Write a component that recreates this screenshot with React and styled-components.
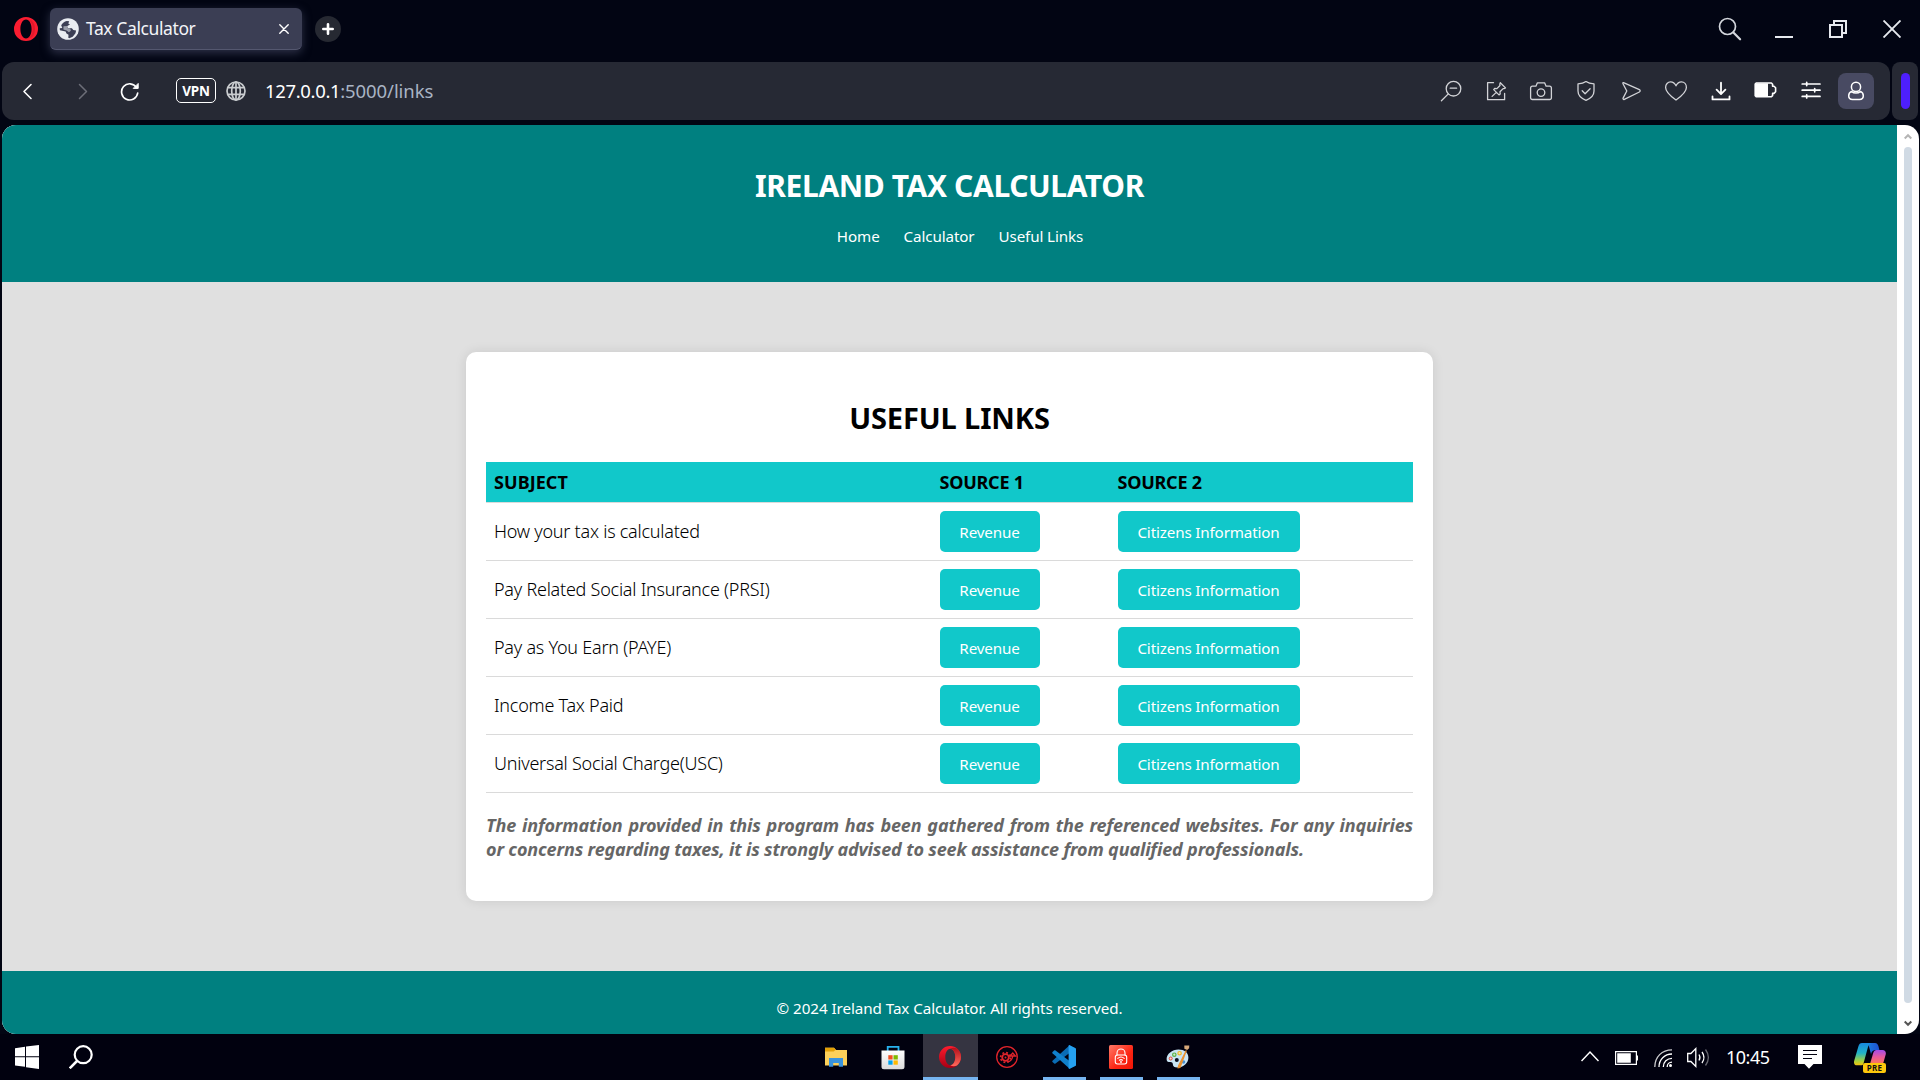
import React from "react";
import styled, { createGlobalStyle } from "styled-components";

const Global = createGlobalStyle`
  * { box-sizing: border-box; }
  html, body { margin: 0; padding: 0; background: #01030f; overflow: hidden; }
  body { font-family: "Noto Sans", "Open Sans", sans-serif; }
  svg { display: block; flex: none; }
`;

const Desktop = styled.div`
  width: 1920px;
  height: 1080px;
  display: flex;
  flex-direction: column;
  background: #020513;
  overflow: hidden;
`;

/* ---------- title bar ---------- */
const TitleBar = styled.div`
  height: 62px;
  flex: none;
  display: flex;
  align-items: flex-start;
  padding: 8px 1px 0 14px;
`;
const OperaButton = styled.div`
  width: 36px;
  padding-top: 9px;
`;
const Tab = styled.div`
  width: 252px;
  height: 42px;
  display: flex;
  align-items: center;
  padding: 0 13px 0 7px;
  border-radius: 6px;
  border-bottom: 1px solid #54576f;
  background: #3b3e54;
  box-shadow: 0 3px 10px rgba(90, 94, 125, 0.5);
`;
const TabTitle = styled.span`
  flex: 1;
  margin-left: 7px;
  padding-bottom: 1px;
  font-size: 17.5px;
  line-height: 40px;
  letter-spacing: -0.4px;
  color: #f3f4f8;
`;
const NewTab = styled.div`
  width: 26px;
  height: 26px;
  margin: 8px 0 0 13px;
  border-radius: 50%;
  background: #262932;
  display: flex;
  align-items: center;
  justify-content: center;
`;
const WindowButtons = styled.div`
  margin-left: auto;
  display: flex;
`;
const WindowButton = styled.div`
  width: 54px;
  height: 42px;
  display: flex;
  align-items: center;
  justify-content: center;
`;

/* ---------- address bar ---------- */
const BarRow = styled.div`
  height: 58px;
  flex: none;
  display: flex;
  gap: 2px;
  padding: 0 2px;
`;
const Toolbar = styled.div`
  width: 1888px;
  display: flex;
  align-items: center;
  padding-right: 11.5px;
  border-radius: 12px;
  background: #262934;
`;
const NavIcons = styled.div`
  display: flex;
  align-items: center;
  gap: 26px;
  margin-left: 10px;
`;
const VpnBadge = styled.div`
  width: 40px;
  height: 25px;
  margin: 0 0 1px 32px;
  border: 1px solid #fff;
  border-radius: 5px;
  color: #fff;
  font-size: 13.5px;
  font-weight: 700;
  line-height: 25px;
  text-align: center;
  letter-spacing: -0.2px;
`;
const GlobeSlot = styled.div`
  margin-left: 10px;
`;
const Url = styled.div`
  margin-left: 19px;
  font-size: 18.5px;
  line-height: 26px;
  letter-spacing: -0.08px;
  color: #a9b4c4;
`;
const Host = styled.span`
  color: #fff;
  letter-spacing: -0.35px;
`;
const ToolIcons = styled.div`
  margin-left: auto;
  display: flex;
`;
const ToolSlot = styled.div`
  width: 45px;
  height: 36px;
  display: flex;
  align-items: center;
  justify-content: center;
  color: ${(p) => (p.$bright ? "#fff" : "#d2d3d7")};
`;
const Profile = styled.div`
  width: 36px;
  height: 36px;
  border-radius: 8px;
  background: #484a62;
  display: flex;
  align-items: center;
  justify-content: center;
`;
const SideHandle = styled.div`
  flex: 1;
  max-width: 26px;
  border-radius: 8px;
  background: #262934;
  display: flex;
  align-items: center;
  justify-content: center;
`;
const Grip = styled.div`
  width: 9px;
  height: 36px;
  border-radius: 5px;
  background: #4e1ffc;
`;

/* ---------- web page ---------- */
const Viewport = styled.div`
  width: 1917px;
  height: 909px;
  flex: none;
  margin: 5px 0 0 2px;
  display: flex;
  border-radius: 14px;
  overflow: hidden;
  background: #fff;
`;
const Page = styled.div`
  width: 1895px;
  display: flex;
  flex-direction: column;
  background: #e0e0e0;
`;
const Header = styled.header`
  height: 157px;
  padding-top: 41px;
  background: #008080;
  color: #fff;
  text-align: center;
`;
const SiteTitle = styled.h1`
  margin: 0;
  font-size: 30px;
  line-height: 40px;
  letter-spacing: -0.38px;
`;
const Nav = styled.nav`
  display: flex;
  justify-content: center;
  gap: 24px;
  padding: 20px 0 0 21px;
`;
const NavLink = styled.a`
  font-size: 15.2px;
  line-height: 20px;
  letter-spacing: -0.12px;
`;
const Main = styled.main`
  flex: 1;
  display: flex;
  justify-content: center;
  align-items: flex-start;
  padding-top: 70px;
`;
const Card = styled.section`
  width: 967px;
  height: 549px;
  padding: 46px 20px 0;
  border-radius: 10px;
  background: #fff;
  box-shadow: 0 0 12px rgba(0, 0, 0, 0.1);
`;
const CardTitle = styled.h2`
  margin: 0 0 24px;
  font-size: 29px;
  line-height: 40px;
  letter-spacing: -0.12px;
  text-align: center;
  color: #000;
`;
const Row = styled.div`
  display: grid;
  grid-template-columns: 445.5px 178px 1fr;
  align-items: center;
  height: 58px;
  border-bottom: 1px solid #dadada;
`;
const HeadRow = styled(Row)`
  height: 41px;
  background: #11c8ca;
`;
const HeadCell = styled.div`
  padding-left: 8px;
  font-size: 18px;
  font-weight: 700;
  line-height: 24px;
  letter-spacing: ${(p) => (p.$wide ? "0.05px" : "-0.25px")};
  color: #000;
`;
const Subject = styled.div`
  padding: 0 0 2px 8px;
  font-size: 18px;
  font-weight: 350;
  line-height: 24px;
  letter-spacing: -0.24px;
  color: #000;
`;
const Source = styled.div`
  padding-left: 8px;
`;
const LinkButton = styled.a`
  display: block;
  width: ${(p) => (p.$wide ? 182 : 100)}px;
  height: 41px;
  border-radius: 5px;
  background: #11c8ca;
  color: #fff;
  font-size: 15.2px;
  line-height: 43px;
  letter-spacing: -0.15px;
  text-align: center;
`;
const Note = styled.p`
  margin: 20px 0 0;
  font-size: 18px;
  font-weight: 700;
  font-style: italic;
  line-height: 24px;
  letter-spacing: -0.15px;
  text-align: justify;
  color: #666;
`;
const Footer = styled.footer`
  height: 63px;
  padding-top: 27px;
  background: #008080;
  color: #fff;
  font-size: 15.2px;
  line-height: 20px;
  letter-spacing: -0.06px;
  text-align: center;
`;
const Scrollbar = styled.div`
  flex: 1;
  display: flex;
  flex-direction: column;
  align-items: center;
  padding-top: 8px;
`;
const Thumb = styled.div`
  width: 8px;
  height: 856px;
  margin: 7px 0 17px;
  border-radius: 4px;
  background: #d0dae4;
`;

/* ---------- taskbar ---------- */
const Taskbar = styled.div`
  height: 46px;
  flex: none;
  display: flex;
  background: #01010f;
`;
const StartArea = styled.div`
  width: 808px;
  display: flex;
  gap: 30px;
  padding: 11px 0 0 15px;
`;
const Apps = styled.div`
  display: flex;
`;
const AppSlot = styled.div`
  width: 57px;
  padding: 0 1px;
`;
const AppTile = styled.div`
  height: 46px;
  display: flex;
  flex-direction: column;
  align-items: center;
  padding-top: 11px;
  background: ${(p) => (p.$active ? "#353441" : "transparent")};

  > svg {
    margin-right: 1px;
  }
`;
const Underline = styled.div`
  width: ${(p) => (p.$active ? 55 : 43)}px;
  height: 3px;
  margin-top: auto;
  background: #76b4f0;
`;
const Tray = styled.div`
  margin-left: auto;
  display: flex;
  align-items: flex-start;
  padding: 9px 34px 0 0;
`;
const TrayItem = styled.div`
  width: ${(p) => p.$w}px;
`;
const Clock = styled.div`
  width: 72px;
  font-size: 18px;
  line-height: 28px;
  letter-spacing: -0.5px;
  color: #fff;
`;

const stroke = (w = 1.4) => ({
  fill: "none",
  stroke: "currentColor",
  strokeWidth: w,
  strokeLinecap: "round",
  strokeLinejoin: "round",
});

const OperaLogo = () => (
  <svg width="24" height="24" viewBox="0 0 24 24">
    <path fillRule="evenodd" fill="#fb1d31" d="M12 0a12 12 0 1 0 0 24a12 12 0 1 0 0-24zM12 2.6c3.2 0 5.6 4.2 5.6 9.4s-2.4 9.4-5.6 9.4S6.4 17.200 6.4 12 8.800 2.600 12 2.600z" />
    <path d="M13 2.500c3.600.8 5.800 4.600 5.800 9.500s-2.200 8.700-5.800 9.500l4.500-.9c2.500-2 3.500-5.200 3.500-8.600s-1-6.600-3.500-8.600z" fill="#b3101f" opacity=".35" />
  </svg>
);

const EarthIcon = () => (
  <svg width="22" height="22" viewBox="0 0 22 22">
    <circle cx="11" cy="11" r="10.800" fill="#e9ecf1" />
    <path fill="#3b3e54" d="M4.200 7.200c1.300-2.200 3.200-3.800 5.600-4.200l2.400.2-.9 2.200 1.700 1.200-2.700 1.500.3 1.900 4.300.3 1.400 1.800 2.800.4-.6 2.800-2.800 3.400-3.400 1.600-1-.5.2-3-2-1.200-.9-2-5.700-1.300-.2-2 2.600-.2z" />
    <path fill="#e9ecf1" d="M6.500 8.300l4-.4-.6 2.200 3.300.4.700 2.300-2 1.400-2.300-1.800-3.200-.8z" opacity=".55" />
  </svg>
);

const toolIcons = [
  <>
    <circle cx="14.500" cy="9.700" r="7.300" />
    <path d="M9.300 14.900L2.400 21.800M11.200 9.200h6.400" />
  </>,
  <>
    <path d="M9.500 3.700H3.600v17h17v-6.200" />
    <path d="M16.300 3.700l5.200 5.200-1.500.8-.9-.1-3.100 3.100.2 2.200-1.200 1-5.300-5.300 1-1.200 2.200.2 3.100-3.100-.2-1.300zM12.300 13.400l-4.200 4" />
  </>,
  <>
    <path d="M3.300 7.200h3.600l1.500-3.400h7.200l1.500 3.400h3.600a1.700 1.700 0 0 1 1.700 1.700v9.900a1.700 1.700 0 0 1-1.700 1.700H3.300a1.700 1.700 0 0 1-1.700-1.700V8.900a1.700 1.700 0 0 1 1.700-1.700z" />
    <circle cx="12" cy="13.600" r="3.800" />
  </>,
  <>
    <path d="M12 2.600c2.300 1.700 5 2.200 8 2.300v7.200c0 4.400-3.200 7.400-8 9.200-4.800-1.800-8-4.800-8-9.200V4.900c3-.1 5.700-.6 8-2.300z" />
    <path d="M8.200 11.800l2.900 2.900 5-5" />
  </>,
  <path d="M4.500 3.600l15.900 7c1 .5 1 1.900 0 2.400L5.300 20.400c-.9.4-1.600-.5-1.200-1.300L7.800 12 4 4.700c-.3-.7-.2-1.300.5-1.100z" />,
  <path d="M12 21C7.300 17.600 1.600 13.400 1.600 8.400c0-3.200 2.200-5.500 5-5.500 2.300 0 4.200 1.400 5.400 3.900 1.200-2.500 3.100-3.900 5.400-3.900 2.800 0 5 2.300 5 5.500C22.400 13.400 16.700 17.600 12 21z" />,
  <path strokeWidth="1.800" d="M12 3.700v11.200M7.600 10.700l4.400 4.400 4.400-4.400M3.500 17.400v3h17v-3" />,
  <>
    <path strokeWidth="1.600" d="M2.200 4h15.200l1.200 1.200v2H20l1.600 1.600v4L20 14.400h-1.400v2.200l-1.200 1.200H2.200l-1-1V5z" />
    <path d="M1.500 4.300h12.500v13.200H1.500z" fill="currentColor" stroke="none" />
  </>,
  <path strokeWidth="1.700" d="M3.200 5h17.800M3.200 11.200h17.800M3.200 17.400h17.800M7.700 3.400v3.200M15.700 9.600v3.200M7.700 15.800V19" />,
];

const ProfileIcon = () => (
  <svg width="24" height="24" viewBox="0 0 24 24" color="#fff" {...stroke(1.5)}>
    <circle cx="12" cy="7.900" r="4.600" />
    <path d="M7.400 12.400c-1.800 1-2.700 2.500-2.700 4.300 0 2.400 1.500 3.700 3.800 3.700h7c2.300 0 3.800-1.300 3.800-3.700 0-1.800-.9-3.300-2.700-4.300-1.300 1.100-2.800 1.700-4.600 1.700s-3.300-.6-4.600-1.700z" />
  </svg>
);

const ExplorerIcon = () => (
  <svg width="24" height="24" viewBox="0 0 24 24">
    <path d="M1 2.800h9l2 2.200H23v15.500H1z" fill="#fcd05a" />
    <path d="M1 2.800h9l1.800 2L9.600 6.400H1z" fill="#e3a008" />
    <path d="M5 21.800V13h14v8.800h-4.200V18H9.200v3.800z" fill="#3a93dc" />
  </svg>
);
const StoreIcon = () => (
  <svg width="24" height="25" viewBox="0 0 24 25">
    <defs>
      <linearGradient id="bag" x1="0" y1="0" x2="0" y2="1">
        <stop offset="0" stopColor="#fff" />
        <stop offset="1" stopColor="#dcdcdc" />
      </linearGradient>
    </defs>
    <path d="M6.700 6.500V1.900h10.800v4.600" fill="none" stroke="#27b2ee" strokeWidth="1.800" />
    <path d="M.5 5.400h23v16.400a2.500 2.500 0 0 1-2.500 2.500H3a2.500 2.500 0 0 1-2.500-2.500z" fill="url(#bag)" />
    <path d="M7.300 10.200h4.300v4.300H7.300z" fill="#f25022" />
    <path d="M12.500 10.200h4.300v4.300h-4.300z" fill="#7fba00" />
    <path d="M7.300 15.400h4.300v4.300H7.300z" fill="#00a4ef" />
    <path d="M12.500 15.400h4.300v4.300h-4.300z" fill="#ffb900" />
  </svg>
);
const OperaAppIcon = () => (
  <svg width="24" height="24" viewBox="0 0 24 24">
    <defs>
      <linearGradient id="operaL" x1="0" y1="0" x2="0" y2="1">
        <stop offset="0" stopColor="#ff1b2d" />
        <stop offset="1" stopColor="#a70014" />
      </linearGradient>
      <linearGradient id="operaR" x1="0" y1="0" x2="0" y2="1">
        <stop offset="0" stopColor="#b3101b" />
        <stop offset="1" stopColor="#ff6a5c" />
      </linearGradient>
    </defs>
    <path fillRule="evenodd" fill="url(#operaL)" d="M12 1a11 11 0 1 0 0 22a11 11 0 1 0 0-22zM12.300 3.800c2.900 0 5 3.700 5 8.200s-2.100 8.200-5 8.200-5-3.700-5-8.200 2.100-8.200 5-8.200z" />
    <path fill="url(#operaR)" d="M12.300 3.800C14 2.600 16.600 2.400 19 3.500c2.500 2 4 5.100 4 8.500s-1.500 6.500-4 8.500c-2.400 1.100-5 .9-6.700-.3 2.900 0 5-3.700 5-8.200s-2.100-8.200-5-8.200z" />
  </svg>
);
const GearAppIcon = () => (
  <svg width="24" height="24" viewBox="0 0 24 24" fill="none" stroke="#e0242b">
    <circle cx="12" cy="12" r="10.300" strokeWidth="1.300" />
    <circle cx="10.500" cy="12.500" r="3.300" strokeWidth="1.800" />
    <circle cx="10.500" cy="12.500" r="4.900" strokeWidth="1.700" strokeDasharray="1.900 1.950" />
    <path d="M12.500 17c3.500-.8 5-3 5.200-6M15 11l2.800-3 2.600 3z" strokeWidth="1.400" />
    <circle cx="10.500" cy="12.500" r="1" fill="#e0242b" stroke="none" />
  </svg>
);
const CodeIcon = () => (
  <svg width="24" height="24" viewBox="0 0 24 24">
    <path d="M17.600.2L.5 15.700c-.4.4-.4 1 0 1.400l1.700 1.500c.4.300.9.300 1.300 0L23.600 3.400z" fill="#0a6cb5" />
    <path d="M17.600 23.800L.5 8.300c-.4-.4-.4-1 0-1.400l1.700-1.500c.4-.3.9-.3 1.300 0L23.600 20.600z" fill="#1080cc" />
    <path d="M17.600 23.800c-.7.300-1 0-1-.7V.9c0-.7.400-1 1-.7l5.600 2.700c.5.300.8.700.8 1.200v15.800c0 .5-.3.900-.8 1.200z" fill="#25a0f0" />
  </svg>
);
const LockIcon = () => (
  <svg width="24" height="24" viewBox="0 0 24 24">
    <defs>
      <linearGradient id="lockBg" x1="0" y1="0" x2="1" y2="1">
        <stop offset="0" stopColor="#ff7a68" />
        <stop offset=".6" stopColor="#fc2412" />
        <stop offset="1" stopColor="#f01505" />
      </linearGradient>
    </defs>
    <rect width="24" height="24" rx="1.500" fill="url(#lockBg)" />
    <g fill="none" stroke="#fff" strokeWidth="1.100" strokeLinecap="round">
      <path d="M8 10V8a4 4 0 0 1 8 0v2" />
      <rect x="6.300" y="10" width="11.400" height="9" rx="2.200" />
      <path d="M8.800 13.300c1.900-1.600 4.500-1.600 6.400 0M10.400 15.200c1-.8 2.200-.8 3.200 0" />
    </g>
    <circle cx="12" cy="17" r=".9" fill="#fff" />
  </svg>
);
const PaintIcon = () => (
  <svg width="24" height="24" viewBox="0 0 24 24">
    <path d="M12.500 4.500C6 4.500.6 9 .6 14c0 2.200 1 3.300 2.700 3 2-.4 3.500.2 3.500 2 0 2.300 1.700 3.600 4.600 3.600 6.200 0 11-4.500 11-10 0-5-4-8.100-9.900-8.100z" fill="#c9e5f4" />
    <circle cx="10.800" cy="15" r="2" fill="#0b1020" />
    <circle cx="4.700" cy="13.500" r="1.500" fill="#f4d9d6" stroke="#e04b3a" />
    <circle cx="8.300" cy="9.700" r="1.700" fill="#cfe9c8" stroke="#58b04a" strokeWidth="1.200" />
    <circle cx="13.600" cy="8.200" r="1.700" fill="#f8e3a0" stroke="#eeb72c" strokeWidth="1.200" />
    <circle cx="17.500" cy="17" r="1.800" fill="#4a90d0" />
    <path d="M20.300 5.500l-6.300 17-1.800.3.400-2z" fill="#ea9230" stroke="#ea9230" strokeWidth="1.200" />
    <path d="M18.300.4l5 .2-.2 2.600-1.900 1.800-2.800-1.200z" fill="#d7a97a" />
  </svg>
);

const CopilotIcon = () => (
  <svg width="32" height="31" viewBox="0 0 32 31">
    <defs>
      <linearGradient id="coA" x1="0" y1="0" x2="0" y2="1">
        <stop offset="0" stopColor="#1789e0" />
        <stop offset=".45" stopColor="#21b3c7" />
        <stop offset=".8" stopColor="#a5d13c" />
        <stop offset="1" stopColor="#f6c30c" />
      </linearGradient>
      <linearGradient id="coB" x1="0" y1="0" x2="0" y2="1">
        <stop offset="0" stopColor="#a24bea" />
        <stop offset=".5" stopColor="#e9599b" />
        <stop offset="1" stopColor="#fb7a55" />
      </linearGradient>
      <linearGradient id="coC" x1="0" y1="0" x2="1" y2="0">
        <stop offset="0" stopColor="#188be4" />
        <stop offset="1" stopColor="#1f4fd0" />
      </linearGradient>
    </defs>
    <path d="M9 0h12c2 0 3 1.500 3.400 3l1 4H22c-3 0-4 1-5 4L14 0z" fill="url(#coC)" />
    <path d="M8 0h9c-2 1-2.700 3-3.300 5L9.500 20.500C9 22 8 22.300 7 22.300H3c-2.500 0-3.500-2-2.800-4.500L4.500 3C5.200 1 6 0 8 0z" fill="url(#coA)" />
    <path d="M22.500 7h6c2.600 0 3.800 2 3.200 4.500L29 21H16l3.300-11.300C20 7.800 21 7 22.500 7z" fill="url(#coB)" />
    <rect x="9" y="20" width="23" height="10" rx="2" fill="#fdc70c" />
    <text x="20.600" y="28" textAnchor="middle" fontSize="8" fontWeight="700" letterSpacing=".3" fontFamily="Noto Sans, sans-serif" fill="#111">PRE</text>
  </svg>
);

const apps = [
  { icon: <ExplorerIcon /> },
  { icon: <StoreIcon /> },
  { icon: <OperaAppIcon />, active: true },
  { icon: <GearAppIcon /> },
  { icon: <CodeIcon />, open: true },
  { icon: <LockIcon />, open: true },
  { icon: <PaintIcon />, open: true },
];

const subjects = [
  "How your tax is calculated",
  "Pay Related Social Insurance (PRSI)",
  "Pay as You Earn (PAYE)",
  "Income Tax Paid",
  "Universal Social Charge(USC)",
];

export default function App() {
  return (
    <Desktop>
      <Global />
      <TitleBar>
        <OperaButton><OperaLogo /></OperaButton>
        <Tab>
          <EarthIcon />
          <TabTitle>Tax Calculator</TabTitle>
          <svg width="10" height="10" viewBox="0 0 10 10" color="#fff" {...stroke(1.4)}><path d="M.8.8l8.400 8.400M9.200.8L.8 9.200" /></svg>
        </Tab>
        <NewTab>
          <svg width="12" height="12" viewBox="0 0 12 12" color="#fff" {...stroke(2.6)}><path d="M6 1.300v9.400M1.300 6h9.400" /></svg>
        </NewTab>
        <WindowButtons>
          <WindowButton>
            <svg width="24" height="24" viewBox="0 0 24 24" color="#d3d6dc" {...stroke(1.7)}><circle cx="9.500" cy="9.500" r="8" /><path d="M15.400 15.400l6.700 6.900" strokeWidth="2.200" /></svg>
          </WindowButton>
          <WindowButton>
            <svg width="18" height="18" viewBox="0 0 18 18"><path d="M0 16h18v2H0z" fill="#e6e9ee" /></svg>
          </WindowButton>
          <WindowButton>
            <svg width="18" height="18" viewBox="0 0 18 18" fill="none" stroke="#e6e9ee" strokeWidth="2"><path d="M1 5h12v12H1zM5 5V1h12v12h-4" /></svg>
          </WindowButton>
          <WindowButton>
            <svg width="18" height="18" viewBox="0 0 18 18" fill="none" stroke="#e6e9ee" strokeWidth="1.900"><path d="M.5.5l17 17M17.500.5l-17 17" /></svg>
          </WindowButton>
        </WindowButtons>
      </TitleBar>

      <BarRow>
        <Toolbar>
          <NavIcons>
            <svg width="30" height="24" viewBox="0 0 30 24" color="#fff" {...stroke(1.6)}><path d="M19 5.500l-7 7 7 7" /></svg>
            <svg width="26" height="24" viewBox="0 0 26 24" color="#6c6e78" {...stroke(1.5)}><path d="M11.500 5.500l7 7-7 7" /></svg>
            <svg width="24" height="24" viewBox="0 0 24 24" color="#fff" {...stroke(1.700)}><path d="M16.500 8.500A8.100 8.100 0 1 0 17.700 14" /><path d="M18.200 4.800v4.600h-4.600z" fill="#fff" strokeWidth="1" /></svg>
          </NavIcons>
          <VpnBadge>VPN</VpnBadge>
          <GlobeSlot>
            <svg width="20" height="20" viewBox="0 0 20 20" color="#c9cccf" {...stroke(1.700)}><circle cx="10" cy="10" r="9" /><ellipse cx="10" cy="10" rx="4.300" ry="9" /><path d="M2.500 6.600h15M2.500 13.400h15M10 1v18" /></svg>
          </GlobeSlot>
          <Url><Host>127.0.0.1</Host>:5000/links</Url>
          <ToolIcons>
            {toolIcons.map((icon, i) => (
              <ToolSlot key={i} $bright={i > 5}>
                <svg width="24" height="24" viewBox="0 0 24 24" {...stroke(1.3)}>{icon}</svg>
              </ToolSlot>
            ))}
            <ToolSlot><Profile><ProfileIcon /></Profile></ToolSlot>
          </ToolIcons>
        </Toolbar>
        <SideHandle><Grip /></SideHandle>
      </BarRow>

      <Viewport>
        <Page>
          <Header>
            <SiteTitle>IRELAND TAX CALCULATOR</SiteTitle>
            <Nav>
              <NavLink>Home</NavLink>
              <NavLink>Calculator</NavLink>
              <NavLink>Useful Links</NavLink>
            </Nav>
          </Header>
          <Main>
            <Card>
              <CardTitle>USEFUL LINKS</CardTitle>
              <HeadRow>
                <HeadCell $wide>SUBJECT</HeadCell>
                <HeadCell>SOURCE 1</HeadCell>
                <HeadCell>SOURCE 2</HeadCell>
              </HeadRow>
              {subjects.map((s) => (
                <Row key={s}>
                  <Subject>{s}</Subject>
                  <Source><LinkButton>Revenue</LinkButton></Source>
                  <Source><LinkButton $wide>Citizens Information</LinkButton></Source>
                </Row>
              ))}
              <Note>
                The information provided in this program has been gathered from the referenced websites. For any
                inquiries or concerns regarding taxes, it is strongly advised to seek assistance from qualified
                professionals.
              </Note>
            </Card>
          </Main>
          <Footer>© 2024 Ireland Tax Calculator. All rights reserved.</Footer>
        </Page>
        <Scrollbar>
          <svg width="8" height="7" viewBox="0 0 8 7" fill="none" stroke="#b4b4b4" strokeWidth="2"><path d="M.7 5.500L4 2.200l3.300 3.300" /></svg>
          <Thumb />
          <svg width="8" height="7" viewBox="0 0 8 7" fill="none" stroke="#555" strokeWidth="2"><path d="M.7 1.500L4 4.800l3.300-3.300" /></svg>
        </Scrollbar>
      </Viewport>

      <Taskbar>
        <StartArea>
          <svg width="24" height="24" viewBox="0 0 24 24" fill="#fff"><path d="M0 3.300l10-1.500v9.400H0zM11 1.600L24 0v11.200H11zM0 12.200h10v9.500L0 20.600zM11 12.200h13V24l-13-1.700z" /></svg>
          <svg width="24" height="24" viewBox="0 0 24 24" fill="none" stroke="#fff"><circle cx="14.200" cy="9.700" r="8.500" strokeWidth="2.200" /><path d="M8 16l-7.300 7.300" strokeWidth="2.600" /></svg>
        </StartArea>
        <Apps>
          {apps.map((a, i) => (
            <AppSlot key={i}>
              <AppTile $active={a.active}>
                {a.icon}
                {(a.active || a.open) && <Underline $active={a.active} />}
              </AppTile>
            </AppSlot>
          ))}
        </Apps>
        <Tray>
          <TrayItem $w={34}>
            <svg width="18" height="26" viewBox="0 0 18 26" fill="none" stroke="#fff" strokeWidth="1.500"><path d="M.5 18L9 9l8.500 9" /></svg>
          </TrayItem>
          <TrayItem $w={39}>
            <svg width="23" height="26" viewBox="0 0 23 26"><path d="M.6 8.600h20.800v12.800H.6z" fill="none" stroke="#fff" strokeWidth="1.200" /><path d="M2.200 10.200h13.600v9.600H2.200zM21.600 12.500H23v5h-1.400z" fill="#fff" /></svg>
          </TrayItem>
          <TrayItem $w={33}>
            <svg width="19" height="26" viewBox="0 0 19 26" fill="none" stroke="#fff" strokeWidth="1.300"><path d="M.8 24C.8 14 8 6.800 18 6.800" opacity=".8" /><path d="M5 24c0-7.500 5.500-13 13-13M9.300 24c0-5 3.700-8.700 8.700-8.700M13.200 24c0-2.800 2-4.800 4.800-4.800" /><circle cx="16.500" cy="22.500" r="1.500" fill="#fff" stroke="none" /></svg>
          </TrayItem>
          <TrayItem $w={39}>
            <svg width="23" height="26" viewBox="0 0 23 26" fill="none" stroke="#fff" strokeWidth="1.300"><path d="M.7 10.500h3.200l4.900-5v18l-4.900-5H.7z" /><path d="M12 11.500c1.200 1.900 1.200 4.100 0 6M15 9c2.500 3.500 2.500 7.500 0 11" /><path d="M18.500 6.500c3.600 5 3.600 11 0 16" opacity=".4" /></svg>
          </TrayItem>
          <Clock>10:45</Clock>
          <TrayItem $w={56}>
            <svg width="24" height="28" viewBox="0 0 24 28"><path d="M0 2h24v19h-8.500L11 25.800 6.500 21H0z" fill="#fff" /><path d="M5 7.500h14M5 11.500h14M5 15.500h9" stroke="#01010f" strokeWidth="1.200" /></svg>
          </TrayItem>
          <CopilotIcon />
        </Tray>
      </Taskbar>
    </Desktop>
  );
}
